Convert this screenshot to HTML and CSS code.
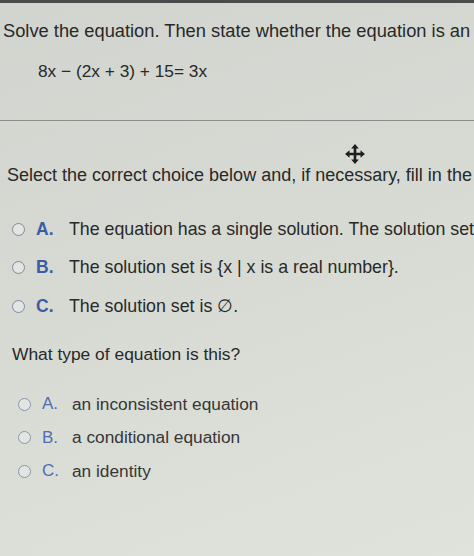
FILE: index.html
```html
<!DOCTYPE html>
<html>
<head>
<meta charset="utf-8">
<link rel="stylesheet" href="styles.css">
</head>
<body>
<div class="topbar"></div>
<div class="page">
  <p class="title">Solve the equation. Then state whether the equation is an</p>
  <p class="equation">8x − (2x + 3) + 15= 3x</p>
  <div class="rule"></div>
  <div class="move">
    <svg width="22" height="22" viewBox="0 0 20 20">
      <path d="M10 1 L13.5 5 H11.2 V8.8 H15 V6.5 L19 10 L15 13.5 V11.2 H11.2 V15 H13.5 L10 19 L6.5 15 H8.8 V11.2 H5 V13.5 L1 10 L5 6.5 V8.8 H8.8 V5 H6.5 Z" fill="#1e1e1e"/>
    </svg>
  </div>
  <p class="prompt">Select the correct choice below and, if necessary, fill in the</p>
  <ul class="choices first">
    <li><span class="radio"></span><span class="letter">A.</span><span class="text">The equation has a single solution. The solution set</span></li>
    <li><span class="radio"></span><span class="letter">B.</span><span class="text">The solution set is {x | x is a real number}.</span></li>
    <li><span class="radio"></span><span class="letter">C.</span><span class="text">The solution set is ∅.</span></li>
  </ul>
  <p class="question">What type of equation is this?</p>
  <ul class="choices second">
    <li><span class="radio"></span><span class="letter">A.</span><span class="text">an inconsistent equation</span></li>
    <li><span class="radio"></span><span class="letter">B.</span><span class="text">a conditional equation</span></li>
    <li><span class="radio"></span><span class="letter">C.</span><span class="text">an identity</span></li>
  </ul>
</div>
</body>
</html>
```
FILE: styles.css
```css
html, body {
  margin: 0;
  padding: 0;
}
body {
  width: 474px;
  height: 556px;
  overflow: hidden;
  font-family: "Liberation Sans", Arial, sans-serif;
  color: #282929;
  background: linear-gradient(160deg, #d2d4cf 0%, #d7dad3 45%, #e0e2dc 100%);
}
.topbar {
  height: 3px;
  background: #4a4b4b;
}
p { margin: 0; }
.title {
  font-size: 18.3px;
  white-space: nowrap;
  padding: 17px 0 0 3px;
  line-height: 22px;
}
.equation {
  font-size: 17.3px;
  padding: 19px 0 0 38px;
  line-height: 20px;
}
.rule {
  margin-top: 39px;
  height: 1px;
  background: #8a8c89;
}
.move {
  display: flex;
  padding: 22px 0 0 344px;
  height: 20px;
}
.prompt {
  font-size: 18px;
  white-space: nowrap;
  padding: 1px 0 0 7px;
  line-height: 22px;
}
.choices {
  list-style: none;
  margin: 0;
  padding: 0;
}
.choices li {
  display: flex;
  align-items: center;
  white-space: nowrap;
  height: 20px;
}
.radio {
  width: 11px;
  height: 11px;
  border: 1.5px solid #7d8aa0;
  border-radius: 50%;
  background: #e3e5e2;
  flex: none;
}
.letter {
  color: #3c5ba6;
  font-weight: bold;
  font-size: 17.5px;
}
.first {
  padding: 33px 0 0 12px;
  display: flex;
  flex-direction: column;
  gap: 18.5px;
}
.first .letter { margin-left: 11px; width: 33px; }
.first .text { font-size: 17.8px; }
.question {
  font-size: 17.4px;
  padding: 27px 0 0 12px;
  line-height: 22px;
}
.second {
  padding: 29px 0 0 18px;
  display: flex;
  flex-direction: column;
  gap: 13.5px;
}
.second .letter { margin-left: 11px; width: 30px; font-weight: normal; color: #4e6db3; font-size: 17px; }
.second .text { font-size: 17.3px; color: #363737; }
.second .radio { border-color: #8796ad; }
```
